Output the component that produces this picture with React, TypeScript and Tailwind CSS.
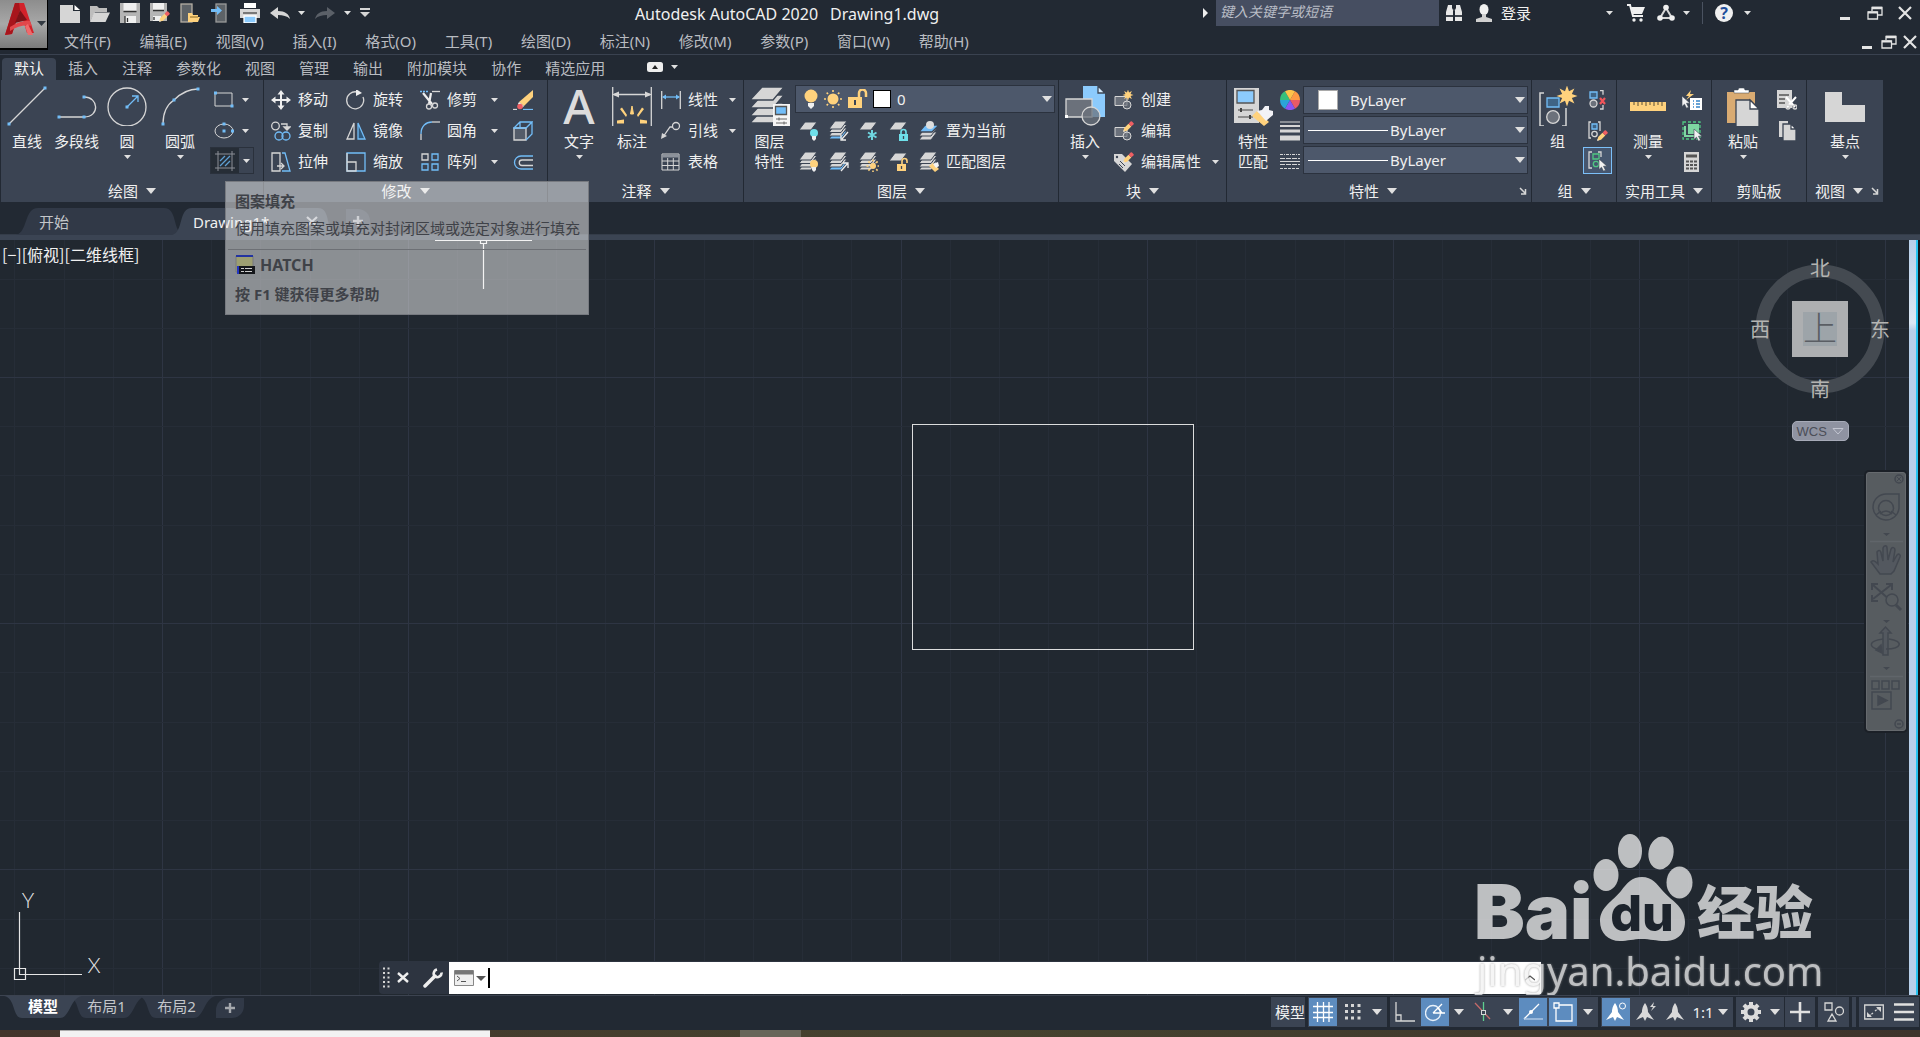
import React from "react";

type P = { children?: React.ReactNode };

const G = "#d6d6d6";
const B = "#72bdf8";
const Y = "#ffd27d";
const D = "#3b4453";

const Icon = ({ s = 20, w, h, children }: P & { s?: number; w?: number; h?: number }) => (
  <svg
    width={w ?? s}
    height={h ?? s}
    viewBox={`0 0 ${w ?? s} ${h ?? s}`}
    fill="none"
    stroke={G}
    strokeWidth="1.3"
    className="shrink-0"
    aria-hidden="true"
  >
    {children}
  </svg>
);

const Down = ({ big = false }: { big?: boolean }) =>
  big ? (
    <svg width="10" height="6" viewBox="0 0 10 6" className="shrink-0" aria-hidden="true">
      <path d="M0 0h10L5 6z" fill="#e0e0e0" />
    </svg>
  ) : (
    <svg width="7" height="4" viewBox="0 0 7 4" className="shrink-0" aria-hidden="true">
      <path d="M0 0h7L3.500 4z" fill="#e0e0e0" />
    </svg>
  );

const Dot = ({ x, y }: { x: number; y: number }) => (
  <rect x={x - 1.5} y={y - 1.5} width="3" height="3" fill={B} stroke="none" />
);

const Sheet = ({ y, fill = G }: { y: number; fill?: string }) => (
  <path d={`M6 ${y}H18L12 ${y + 8}H0z`} fill={fill} stroke={D} strokeWidth="1" />
);
const Stack = ({ bottom = G }: { bottom?: string }) => (
  <>
    <Sheet y={10} fill={bottom} />
    <Sheet y={7} />
    <Sheet y={3.5} />
    <Sheet y={0} />
  </>
);
const Bulb = ({ x, y, c }: { x: number; y: number; c: string }) => (
  <g stroke="none">
    <circle cx={x} cy={y} r="4" fill={c} />
    <path d={`M${x - 2} ${y + 3}h4v3l-2 2l-2-2z`} fill="#eee" />
  </g>
);
const Lock = ({ x, y, c, open }: { x: number; y: number; c: string; open?: boolean }) => (
  <g>
    <rect x={x} y={y} width="9" height="7" fill={c} stroke="none" />
    <path
      d={open ? `M${x + 5} ${y}v-3a2.500 2.500 0 0 1 5 0v2` : `M${x + 2} ${y}v-2a2.500 2.500 0 0 1 5 0v2`}
      stroke={c}
      strokeWidth="1.600"
    />
    <path d={`M${x + 4.5} ${y + 2}v3`} stroke={D} />
  </g>
);
const Sun = ({ x, y, r = 4, c = Y }: { x: number; y: number; r?: number; c?: string }) => (
  <g stroke={c} strokeWidth="1.6">
    <circle cx={x} cy={y} r={r} fill={c} stroke="none" />
    {[0, 45, 90, 135, 180, 225, 270, 315].map((a) => (
      <path key={a} d={`M${x} ${y - r - 1.5}v-2`} transform={`rotate(${a} ${x} ${y})`} />
    ))}
  </g>
);
const Star = ({ x, y, r }: { x: number; y: number; r: number }) => (
  <polygon
    fill={Y}
    stroke="none"
    points={Array.from({ length: 16 }, (_, i) => {
      const q = i % 2 ? r * 0.5 : r;
      const a = (i * Math.PI) / 8 - Math.PI / 2;
      return `${(x + q * Math.cos(a)).toFixed(2)},${(y + q * Math.sin(a)).toFixed(2)}`;
    }).join(" ")}
  />
);
const Pencil = ({ x, y }: { x: number; y: number }) => (
  <g transform={`translate(${x} ${y}) rotate(45)`} stroke="none">
    <path d="M-2 3h4v6l-2 3.500l-2-3.500z" fill={Y} />
    <rect x="-2" y="-1" width="4" height="4" rx="1" fill="#ef5f63" />
    <path d="M-1 10.800L0 12.500l1-1.700z" fill="#eee" />
  </g>
);
const Cursor = ({ x, y }: { x: number; y: number }) => (
  <path
    transform={`translate(${x} ${y})`}
    d="M0 0v10.500l2.500-2.300l2 4l2-1l-2-4h3.500z"
    fill="#f2f2f2"
    stroke={D}
    strokeWidth=".6"
  />
);

/* ---------- ribbon building blocks ---------- */

const Panel = ({
  title,
  width,
  children,
  arrow = true,
  launcher = false,
}: P & { title: string; width: string; arrow?: boolean; launcher?: boolean }) => (
  <section className={`${width} shrink-0 h-[122px] bg-[#3b4453] flex flex-col`}>
    <div className="flex pt-1 h-[97px]">{children}</div>
    <footer className="h-[25px] pt-[3px] flex items-center">
      <button className="flex-1 flex items-center justify-center gap-2">
        <span className="whitespace-nowrap">{title}</span>
        {arrow && <Down big />}
      </button>
      {launcher && (
        <button aria-label={`${title} 设置`} className="w-3 shrink-0">
          <Icon s={8}>
            <path d="M1 1l5 5M6.500 2v5H2" strokeWidth="1.500" />
          </Icon>
        </button>
      )}
    </footer>
  </section>
);

const Big = ({
  label,
  label2,
  width,
  arrow,
  children,
}: P & { label: string; label2?: string; width: string; arrow?: boolean }) => (
  <button className={`${width} shrink-0 flex flex-col items-center pt-0.5`}>
    {children}
    <span className="pt-[5px] leading-5 whitespace-nowrap">{label}</span>
    {label2 && <span className="leading-5">{label2}</span>}
    {arrow && (
      <span className="h-3 flex items-center">
        <Down />
      </span>
    )}
  </button>
);

const Small = ({ label, children }: P & { label?: string }) => (
  <button className="h-[31px] flex items-center gap-[7px] whitespace-nowrap">
    {children}
    {label && <span className="pb-0.5">{label}</span>}
  </button>
);
const Drop = ({ name }: { name: string }) => (
  <button aria-label={name} className="h-[31px] w-3.5 flex items-center justify-center">
    <Down />
  </button>
);

/* ---------- title bar ---------- */

const QIcon = ({ name, children, width = "w-[30px]" }: P & { name: string; width?: string }) => (
  <button aria-label={name} className={`${width} h-[26px] shrink-0 flex items-center justify-center`}>
    {children}
  </button>
);

const WinMin = () => (
  <Icon w={16} h={14}>
    <path d="M3 12.500h10" strokeWidth="3" stroke="#e4e4e4" />
  </Icon>
);
const WinRestore = () => (
  <Icon w={16} h={14}>
    <path d="M5 5V1.500h10V9h-4" stroke="#e4e4e4" />
    <path d="M5 2h10" strokeWidth="2.500" stroke="#e4e4e4" />
    <path d="M1 6h9.500v7H1z" stroke="#e4e4e4" />
    <path d="M1 6.500h9.500" strokeWidth="2" stroke="#e4e4e4" />
  </Icon>
);
const WinClose = () => (
  <Icon w={14} h={14}>
    <path d="M1 1l12 12M13 1L1 13" strokeWidth="2.200" stroke="#e4e4e4" />
  </Icon>
);

const menus = [
  "文件(F)", "编辑(E)", "视图(V)", "插入(I)", "格式(O)", "工具(T)",
  "绘图(D)", "标注(N)", "修改(M)", "参数(P)", "窗口(W)", "帮助(H)",
];

const Header = () => (
  <header className="flex h-[55px] border-b border-[#3a4250]">
    <button
      aria-label="应用程序菜单"
      className="w-12 h-[50px] shrink-0 flex items-center border-b-2 border-r border-black bg-gradient-to-b from-[#8d8d8d] via-[#a8a8a8] to-[#7b7b7b]"
    >
      <svg width="46" height="48" viewBox="0 0 46 48" aria-hidden="true">
        <path d="M5 35L15 3h9l10 30h-7L20 10l-8 24z" fill="#d3222a" />
        <path d="M5 35L15 3h4L20 10l-8 24z" fill="#a8151c" />
        <path d="M10 27c8-5 15-7 20-6l2 5c-7-2-14 0-22 5z" fill="#e2474b" />
        <path d="M20 10l-5 13 12-3z" fill="#7d1217" />
        <path d="M28 24l5 11h-5l-3-9z" fill="#ef6a6c" />
        <path d="M37 21h9l-4.500 5z" fill="#333a42" />
      </svg>
    </button>
    <div className="flex-1 flex flex-col min-w-0">
      <div className="flex h-[30px] pl-[7px]">
        <QIcon name="新建">
          <Icon><path d="M0 2h13v6h7v12H0z" fill={G} stroke="none" /><path d="M14.500 2l5.500 5h-5.500z" fill="#fff" stroke="none" /></Icon>
        </QIcon>
        <QIcon name="打开">
          <Icon><path d="M0 19V3h7l2 2h8v4H5z" fill="#bdbdbd" stroke="none" /><path d="M4 9.500h16L15.500 19H0z" fill={G} stroke="none" /></Icon>
        </QIcon>
        <QIcon name="保存">
          <Icon><path d="M0 0h20v20H0z" fill="#b5b5b5" stroke="none" /><path d="M3.500 0h13v8h-13zM5 13h11v7H5z" fill="#f0f0f0" stroke="none" /><path d="M3.500 8.500h13M5 13v7M7.500 15v4" stroke="#333" /></Icon>
        </QIcon>
        <QIcon name="另存为">
          <Icon><path d="M0 0h17v18H0z" fill="#b5b5b5" stroke="none" /><path d="M3 0h11v7H3zM3 13h8v5H3z" fill="#f0f0f0" stroke="none" /><path d="M3 7.500h11M4 14v3" stroke="#333" /><Pencil x={18} y={10} /></Icon>
        </QIcon>
        <QIcon name="从 Web 打开">
          <Icon><rect x="1" y="1" width="11" height="18" fill="#5d6267" stroke="#b5aea4" /><path d="M8 19v-9h4l1 2h5v2h2l-2 5z" fill={Y} stroke="none" /><path d="M10 14h8" stroke="#a57f35" /></Icon>
        </QIcon>
        <QIcon name="保存到 Web">
          <Icon><rect x="6" y="1" width="10" height="18" fill="#5d6267" stroke="#9a9a9a" /><path d="M1 6h6V3l5 4.500L7 12V9H1z" fill={B} stroke="none" /></Icon>
        </QIcon>
        <QIcon name="打印">
          <Icon><path d="M4 0h12v5H4z" fill="#fff" stroke="none" /><path d="M0 6h20v9H0z" fill={G} stroke="none" /><path d="M3 10h14" stroke="#444" /><path d="M4 13h12v7H4z" fill="#8ccbfd" stroke="#fff" /></Icon>
        </QIcon>
        <QIcon name="放弃">
          <Icon><path d="M0 10l8-6v4c7 0 11 3 12 8c-3-3-7-4-12-4v4z" fill={G} stroke="none" /></Icon>
        </QIcon>
        <QIcon name="放弃列表" width="w-3"><Down /></QIcon>
        <QIcon name="重做" width="w-9">
          <Icon><path d="M20 10l-8-6v4C5 8 1 11 0 16c3-3 7-4 12-4v4z" fill="#5b6068" stroke="none" /></Icon>
        </QIcon>
        <QIcon name="重做列表" width="w-2"><Down /></QIcon>
        <QIcon name="自定义快速访问工具栏" width="w-7">
          <Icon w={10} h={10}><path d="M0 1h10" strokeWidth="2" /><path d="M0 4h10l-5 5z" fill={G} stroke="none" /></Icon>
        </QIcon>
        <h1 className="flex-1 h-[30px] pb-0.5 flex items-center justify-center gap-3 text-base text-[#f0f0f0] whitespace-nowrap">
          <span>Autodesk AutoCAD 2020</span>
          <span>Drawing1.dwg</span>
        </h1>
        <QIcon name="展开搜索" width="w-[21px]">
          <Icon w={5} h={10}><path d="M0 0l5 5l-5 5z" fill="#eee" stroke="none" /></Icon>
        </QIcon>
        <input
          aria-label="搜索"
          placeholder="键入关键字或短语"
          className="w-[223px] h-[26px] pb-1 bg-[#464e61] px-1 text-sm italic placeholder:text-[#b9bdc6] outline-none"
        />
        <QIcon name="搜索">
          <Icon s={18}><path d="M3 1h4v3l1 2v11H1V8zM15 1h-4v3l-1 2v11h7V8z" fill="#e8e8e8" stroke="none" /><path d="M1 12h7M10 12h7M8 6h2" stroke="#40454d" strokeWidth="2" /></Icon>
        </QIcon>
        <QIcon name="用户">
          <Icon s={18}><ellipse cx="9" cy="5.500" rx="4.500" ry="5.500" fill="#f0f0f0" stroke="none" /><path d="M7 10h4v3l6 2v3H1v-3l6-2z" fill="#d0d0d0" stroke="none" /></Icon>
        </QIcon>
        <button className="w-[118px] h-[26px] pl-0.5 pr-1 flex items-center justify-between">
          <span>登录</span><Down />
        </button>
        <QIcon name="商店" width="w-[38px]">
          <Icon s={18}><path d="M0 1h3l3 11h10" stroke="#f0f0f0" strokeWidth="2" /><path d="M4 3h14l-3 7H6z" fill="#f0f0f0" stroke="none" /><circle cx="7" cy="16" r="1.700" fill="#f0f0f0" stroke="none" /><circle cx="14" cy="16" r="1.700" fill="#f0f0f0" stroke="none" /></Icon>
        </QIcon>
        <QIcon name="Autodesk 应用" width="w-[22px]">
          <Icon s={18}><path d="M9 4L3 14h12z" stroke={G} strokeWidth="2" /><circle cx="9" cy="3.500" r="2.800" fill="#f0f0f0" stroke="none" /><circle cx="3" cy="14" r="2.800" fill="#f0f0f0" stroke="none" /><circle cx="15" cy="14" r="2.800" fill="#f0f0f0" stroke="none" /></Icon>
        </QIcon>
        <QIcon name="应用列表" width="w-[18px]"><Down /></QIcon>
        <span className="w-3.5 h-[26px] flex justify-center py-0.5"><span className="w-px bg-[#4a5260]" /></span>
        <QIcon name="帮助">
          <span className="size-[18px] rounded-full bg-[#f0f0f0] text-[#1f4f9c] text-base leading-[18px] font-bold text-center">?</span>
        </QIcon>
        <QIcon name="帮助列表" width="w-4"><Down /></QIcon>
        <span className="w-[75px]" />
        <QIcon name="最小化"><WinMin /></QIcon>
        <QIcon name="还原"><WinRestore /></QIcon>
        <QIcon name="关闭"><WinClose /></QIcon>
      </div>
      <div className="flex h-6 pl-4 text-[#b9bcc1]">
        <nav className="flex w-[905px] justify-between">
          {menus.map((m) => (
            <button key={m} className="whitespace-nowrap pb-0.5">{m}</button>
          ))}
        </nav>
        <span className="flex-1" />
        <button aria-label="最小化图形" className="w-[22px] flex items-center justify-center"><WinMin /></button>
        <button aria-label="还原图形" className="w-[22px] flex items-center justify-center"><WinRestore /></button>
        <button aria-label="关闭图形" className="w-5 flex items-center justify-center"><WinClose /></button>
      </div>
    </div>
  </header>
);

const tabs = ["默认", "插入", "注释", "参数化", "视图", "管理", "输出", "附加模块", "协作", "精选应用"];
const RibbonTabs = () => (
  <nav className="flex h-[25px] pt-[3px] pl-0.5">
    {tabs.map((t, i) => (
      <button
        key={t}
        className={
          i === 0
            ? "px-3 h-[22px] pb-0.5 leading-5 bg-[#3b4453] text-[#f4f4f4] rounded-t-sm"
            : "px-3 h-[22px] pb-0.5 leading-5 text-[#b9bcc1]"
        }
      >
        {t}
      </button>
    ))}
    <button aria-label="最小化功能区" className="ml-[30px] h-[18px] flex items-center gap-2">
      <svg width="16" height="10" viewBox="0 0 16 10" aria-hidden="true">
        <rect width="16" height="10" rx="2.500" fill="#eee" /><path d="M5 7h6L8 3z" fill="#222" />
      </svg>
      <Down />
    </button>
  </nav>
);

/* ---------- ribbon panels ---------- */

const DrawPanel = () => (
  <Panel title="绘图" width="w-[262px]">
    <Big label="直线" width="w-[52px]">
      <Icon s={40}><path d="M2 38L38 2" /><Dot x={2} y={38} /><Dot x={38} y={2} /></Icon>
    </Big>
    <Big label="多段线" width="w-[47px]">
      <Icon s={40}><path d="M2 31h25M27 11c15 0 16 20 0 20" /><Dot x={2} y={31} /><Dot x={27} y={31} /><Dot x={27} y={11} /></Icon>
    </Big>
    <Big label="圆" width="w-[54px]" arrow>
      <Icon s={40}><circle cx="20" cy="21" r="19" /><path d="M20 21L31 10M25 10h6v6" stroke={B} /><Dot x={20} y={21} /></Icon>
    </Big>
    <Big label="圆弧" width="w-[52px]" arrow>
      <Icon s={40}><path d="M3 38C3 26 8 18 14 14C20 8 28 3 38 3" /><Dot x={3} y={38} /><Dot x={14} y={14} /><Dot x={38} y={3} /></Icon>
    </Big>
    <div className="ml-1 flex flex-col">
      {[
        <Icon key="r"><path d="M1 3h17v13H1z" strokeWidth="1" /><Dot x={1.5} y={3} /><Dot x={18} y={16} /></Icon>,
        <Icon key="e"><ellipse cx="10" cy="10" rx="9" ry="7" strokeWidth="1" /><Dot x={10} y={3} /><Dot x={10} y={10} /><Dot x={18.5} y={10} /></Icon>,
      ].map((ic, i) => (
        <div key={i} className="flex h-[31px]">
          <button aria-label={i ? "椭圆" : "矩形"} className="w-[28px] flex items-center justify-center">{ic}</button>
          <Drop name={i ? "椭圆选项" : "矩形选项"} />
        </div>
      ))}
      <div className="flex h-[27px] mt-px border border-[#2a313c]">
        <button aria-label="图案填充" className="w-[28px] bg-[#262d36] flex items-center justify-center">
          <Icon>
            <path d="M5 10l5-5M5 15L15 5M10 15l5-5" stroke="#5f9fd2" />
            <path d="M0 3h20M0 17h20M3 0v20M17 0v20" stroke="#8b8f96" strokeWidth="1" />
          </Icon>
        </button>
        <button aria-label="填充选项" className="w-3.5 flex items-center justify-center"><Down /></button>
      </div>
    </div>
  </Panel>
);

const ModifyPanel = () => (
  <Panel title="修改" width="w-[283px]">
    <div className="pl-[7px] w-[82px] flex flex-col">
      <Small label="移动">
        <Icon><path d="M10 2v16M2 10h16" stroke="#eee" strokeWidth="2" /><path d="M10 0l3.500 4.500h-7zM10 20l3.500-4.500h-7zM0 10l4.500-3.500v7zM20 10l-4.500-3.500v7z" fill="#eee" stroke="none" /></Icon>
      </Small>
      <Small label="复制">
        <Icon><circle cx="4.500" cy="5" r="3.800" /><path d="M10 3h6v5" /><path d="M13 6l3 3l3-3z" fill={G} /><circle cx="8" cy="15" r="4" stroke={B} /><circle cx="15" cy="15" r="4" stroke={B} /></Icon>
      </Small>
      <Small label="拉伸">
        <Icon><path d="M1 1h8v18H1z" /><path d="M11 1h3l5 18h-8" stroke={B} /><path d="M6 14h7M10 11l3 3l-3 3" /></Icon>
      </Small>
    </div>
    <div className="w-[74px] flex flex-col">
      <Small label="旋转">
        <Icon><path d="M11 2A8.500 8.500 0 1 0 17 7" /><path d="M10-1l6 4l-6 3z" fill="#eee" stroke="none" /></Icon>
      </Small>
      <Small label="镜像">
        <Icon><path d="M8 2v16H1z" /><path d="M12 2v16h7z" stroke={B} fill="#31597c" /></Icon>
      </Small>
      <Small label="缩放">
        <Icon><path d="M1 1h18v18H1z" stroke={B} /><path d="M1 10v9h9v-9zM1 1v9" /></Icon>
      </Small>
    </div>
    <div className="w-[67px] flex flex-col">
      <Small label="修剪">
        <Icon><path d="M0 1.500h8" stroke={B} strokeDasharray="2 1" /><path d="M12 1.500h8" /><path d="M3 3l9 11M11 3L9 14" stroke="#eee" strokeWidth="2.200" /><circle cx="9" cy="16.500" r="2.500" /><circle cx="15" cy="15.500" r="2.500" /></Icon>
      </Small>
      <Small label="圆角">
        <Icon><path d="M1 19v-6" /><path d="M1 13C1 5 6 1 12 1" stroke={B} /><path d="M12 1h8" /></Icon>
      </Small>
      <Small label="阵列">
        <Icon><path d="M2 2h6v6H2z" /><path d="M12 2h6v6h-6zM2 12h6v6H2zM12 12h6v6h-6z" stroke={B} /></Icon>
      </Small>
    </div>
    <div className="w-[26px] flex flex-col items-start">
      <Drop name="修剪选项" /><Drop name="圆角选项" /><Drop name="阵列选项" />
    </div>
    <div className="flex flex-col">
      <Small><Icon><path d="M20 0v7l-9 9l-5-4z" fill={Y} stroke="none" /><path d="M6 12l5 4l-1.500 1.500L5 14z" fill="#fff" stroke="none" /><circle cx="7" cy="16.500" r="2.800" fill="#ef5f63" stroke="none" /><path d="M0 19.500h4" /><path d="M10 19.500h10" stroke={B} /></Icon></Small>
      <Small><Icon><path d="M1 7h12v12H1z" fill="#545c69" /><path d="M1 7l6-6h12l-6 6zM13 19l6-6V1M7 1v6" stroke={B} /></Icon></Small>
      <Small><Icon><path d="M20 4H8a6.500 6.500 0 0 0 0 13h12" stroke={B} /><path d="M20 8H9a2.700 2.700 0 0 0 0 5.500h11" /></Icon></Small>
    </div>
  </Panel>
);

const AnnotatePanel = () => (
  <Panel title="注释" width="w-[195px]">
    <Big label="文字" width="w-[62px]" arrow>
      <span className="h-10 text-[48px] leading-10 font-medium text-[#dcdcdc]">A</span>
    </Big>
    <Big label="标注" width="w-[44px]">
      <Icon s={40}>
        <path d="M.7 1v39M39.300 1v39M2 8.500h36" />
        <path d="M0 8.500l7-3v6zM40 8.500l-7-3v6z" fill={G} stroke="none" />
        <g fill={Y} stroke="none">
          <path d="M18.500 28l1.500-8l1.500 8z" stroke={Y} strokeWidth="1" />
          <path d="M14 31l-6-8l2-1.500l5 7.500zM26 31l6-8l-2-1.500l-5 7.500z" />
          <path d="M12 33.500l-7 1v3h7zM28 33.500l7 1v3h-7z" />
        </g>
      </Icon>
    </Big>
    <div className="ml-[7px] w-[62px] flex flex-col">
      <Small label="线性"><Icon><path d="M.7 1v18M19.300 1v18" /><path d="M2 7h16" stroke={B} /><path d="M1 7l4-2.500v5zM19 7l-4-2.500v5z" fill={B} stroke="none" /></Icon></Small>
      <Small label="引线"><Icon><path d="M2 16L9 6h3" /><circle cx="15" cy="5" r="3.500" /><path d="M0 18l1-6l5 3z" fill={G} stroke="none" /></Icon></Small>
      <Small label="表格"><Icon><path d="M1 2h17v16H1zM1 9h17M1 13.500h17M6.700 6v12M12.300 6v12" strokeWidth="1" /><path d="M1 4h17" strokeWidth="3" stroke="#8d939c" /></Icon></Small>
    </div>
    <div className="w-4 flex flex-col items-end"><Drop name="线性选项" /><Drop name="引线选项" /></div>
  </Panel>
);

const Select = ({ label, options, children }: P & { label: string; options: string[] }) => (
  <label className="flex-1 h-7 flex items-center bg-[#4d586b] border border-[#2b323e]">
    {children}
    <select aria-label={label} className="flex-1 min-w-0 appearance-none bg-transparent outline-none text-[15px]">
      {options.map((o) => <option key={o}>{o}</option>)}
    </select>
    <span className="pr-0.5"><Down big /></span>
  </label>
);

const LayerPanel = () => (
  <Panel title="图层" width="w-[314px]">
    <Big label="图层" label2="特性" width="w-[51px]">
      <Icon s={40}>
        {[24, 17, 9, 1].map((y) => <path key={y} d={`M12 ${y}h22l-11 13H0z`} fill={G} stroke={D} />)}
        <path d="M23 18h17v22H23z" fill="#f5f5f5" stroke="none" />
        <path d="M25.500 20.500h11v8h-11z" fill={B} stroke="#555" />
        <path d="M26 33h11M26 37h11M29 31.500v3M34 35.500v3" stroke="#666" strokeWidth="1" />
      </Icon>
    </Big>
    <div className="flex-1 pr-[3px] flex flex-col">
      <div className="h-[31px] pt-px flex">
        <Select label="图层" options={["0"]}>
          <span className="flex items-center gap-[5px] pl-2 pr-1.5">
            <Icon w={14} h={20}><circle cx="7" cy="7" r="6.500" fill={Y} stroke="none" /><path d="M4 14h6v3l-3 3l-3-3z" fill="#f0f0f0" stroke="none" /></Icon>
            <Icon><Sun x={10} y={10} r={5.5} /></Icon>
            <Icon><path d="M0 8h14v11H0z" fill={Y} stroke="none" /><path d="M11 8V4a3.500 3.500 0 0 1 7 0v4" stroke={Y} strokeWidth="2.500" /><path d="M7 11v5" stroke={D} strokeWidth="2" /></Icon>
            <span className="size-[18px] bg-white border border-black" />
          </span>
        </Select>
      </div>
      <div className="flex pl-1 gap-2.5">
        <Small><Icon><Sheet y={1} /><Bulb x={15} y={12} c="#6fe0ea" /></Icon></Small>
        <Small><Icon><Stack bottom={B} /><path d="M19 11l-6 7M12 14v5h5" stroke="#eee" /></Icon></Small>
        <Small><Icon><Sheet y={1} /><path d="M13 9v10M9 11.500l8.500 5M17.500 11.500l-8.500 5" stroke="#6fd6e0" strokeWidth="2" /></Icon></Small>
        <Small><Icon><Sheet y={1} /><Lock x={10} y={13} c="#6fe0ea" /></Icon></Small>
        <Small label="置为当前"><Icon><Sheet y={11} /><Sheet y={7} /><path d="M6 4h14l-7 7H0z" fill={B} stroke={D} /><circle cx="11" cy="4" r="4" fill="#ddd" stroke="none" /></Icon></Small>
      </div>
      <div className="flex pl-1 gap-2.5">
        <Small><Icon><Stack /><Bulb x={15} y={12} c={Y} /></Icon></Small>
        <Small><Icon><Stack bottom={B} /><path d="M12 19l7-8M14 11h5v5" stroke="#eee" /></Icon></Small>
        <Small><Icon><Stack /><Sun x={14} y={14} r={3} /></Icon></Small>
        <Small><Icon><Sheet y={1} /><Lock x={8} y={12} c={Y} open /></Icon></Small>
        <Small label="匹配图层"><Icon><Stack /><path d="M10 14l4-3l6 6l-4 3z" fill={Y} stroke="none" /><path d="M14 12l5-2l1 4l-3 2z" fill="#f4f4f4" stroke="none" /></Icon></Small>
      </div>
    </div>
  </Panel>
);

const Block = () => (
  <g strokeWidth="1"><path d="M1 6.500h12v9H1z" fill="#6b717b" /><circle cx="13" cy="15" r="4" fill="#6b717b" fillOpacity=".7" /></g>
);

const BlockPanel = () => (
  <Panel title="块" width="w-[167px]">
    <Big label="插入" width="w-[52px]" arrow>
      <Icon s={40}>
        <path d="M18 0h15l7 7v24H18z" fill="#8ccbfd" stroke="none" /><path d="M33 0v7h7z" fill="#d7edff" stroke={D} />
        <path d="M1 13h26v18H1z" fill="#6b717b" /><circle cx="26" cy="30" r="9" fill="#6b717b" fillOpacity=".75" />
        <rect x="0" y="29" width="3" height="3" fill="#fff" stroke="none" />
      </Icon>
    </Big>
    <div className="ml-[3px] w-[94px] flex flex-col">
      <Small label="创建"><Icon><Block /><Star x={14} y={5} r={5.5} /></Icon></Small>
      <Small label="编辑"><Icon><Block /><Pencil x={18} y={2} /></Icon></Small>
      <Small label="编辑属性"><Icon><path d="M0 2h8l10 10l-7 8L0 9z" fill={G} stroke="none" /><circle cx="3" cy="5" r="1.200" fill={D} stroke="none" /><path d="M6 9l5 5M5 12l4 4" stroke={D} strokeWidth="1" /><Pencil x={18} y={2} /></Icon></Small>
    </div>
    <div className="h-[93px] flex flex-col justify-end"><Drop name="编辑属性选项" /></div>
  </Panel>
);

const wheel = ["#ff9a45", "#ea5a66", "#8a55f5", "#2ba4d8", "#37c07c", "#ffc34a"];
const PropsPanel = () => (
  <Panel title="特性" width="w-[304px]" launcher>
    <Big label="特性" label2="匹配" width="w-[52px]">
      <Icon s={40}>
        <path d="M1 2h25v35H1z" fill={G} stroke="none" /><path d="M4 4.500h17v12.500H4z" fill="#8ccbfd" stroke="#555" />
        <path d="M5 24h15M5 31h15" stroke="#777" /><path d="M8 22v4M17 29v4" stroke="#444" strokeWidth="2" />
        <path d="M19 30l5-5l12 11l-5 4z" fill={Y} stroke="none" /><path d="M24 25l5-1l3-4h4v4l4 1v4l-7 6z" fill="#f2f2f6" stroke="none" />
      </Icon>
    </Big>
    <div className="w-6 pl-px flex flex-col">
      <Small>
        <Icon>
          {wheel.map((c, i) => (
            <path key={c} d="M10 10V0A10 10 0 0 1 18.660 5z" fill={c} stroke="none" transform={`rotate(${i * 60 + 30} 10 10)`} />
          ))}
        </Icon>
      </Small>
      <Small><Icon><path d="M0 1h20" strokeWidth="1" /><path d="M0 5h20" strokeWidth="2" /><path d="M0 10h20" strokeWidth="3" /><path d="M0 17h20" strokeWidth="5" /></Icon></Small>
      <Small><Icon><g strokeWidth="1"><path d="M0 2.500h20" strokeDasharray="3 1 1 1" /><path d="M0 6.500h20" strokeDasharray="5 1" /><path d="M0 9.500h20" /><path d="M0 12.500h20" strokeDasharray="5 1" /><path d="M0 16.500h20" strokeDasharray="3 1" /></g></Icon></Small>
    </div>
    <div className="flex-1 pt-0.5 pr-[3px] flex flex-col gap-0.5">
      <div className="flex h-7"><Select label="对象颜色" options={["ByLayer"]}>
        <span className="ml-3.5 mr-3 size-5 bg-white border border-[#a9a9a9]" />
      </Select></div>
      <div className="flex h-7"><Select label="线宽" options={["ByLayer"]}><span className="ml-1 mr-0.5 w-20 h-px bg-white" /></Select></div>
      <div className="flex h-7"><Select label="线型" options={["ByLayer"]}><span className="ml-1 mr-0.5 w-20 h-px bg-white" /></Select></div>
    </div>
  </Panel>
);

const GroupPanel = () => (
  <Panel title="组" width="w-[84px]">
    <Big label="组" width="w-[51px]">
      <Icon s={40}>
        <path d="M6 7H2v33h4M24 40h4V22" strokeWidth="1.500" /><path d="M9 12h12v9H9z" fill="#3f6485" stroke={B} />
        <circle cx="15" cy="31" r="6.300" fill="#6b717b" /><Star x={29} y={10} r={10.5} />
      </Icon>
    </Big>
    <div className="flex flex-col items-center">
      <Small><Icon><path d="M2 2h7v6H2z" fill="#3f6485" stroke={B} /><circle cx="5.500" cy="13.500" r="3.500" fill="#6b717b" /><path d="M12 .7h3v4M15 15v4h-3" /><path d="M12 8l5 6M17 8l-5 6" stroke="#f0555a" strokeWidth="2.200" /></Icon></Small>
      <Small><Icon><path d="M3 1H1v16h2M10 1h2v9" /><path d="M4 3h5v5H4z" fill="#3f6485" stroke={B} /><circle cx="6.500" cy="13" r="2.700" /><Pencil x={18} y={11} /></Icon></Small>
      <button aria-label="组选择" className="mt-px h-[27px] w-[29px] border border-[#7cc0f8] bg-[#46566e] flex items-center justify-center">
        <Icon><path d="M4 1H1v16h3M10 1h3v5" /><path d="M5 3h6v5H5z" stroke="#4fc783" /><circle cx="8" cy="13" r="2.700" stroke="#4fc783" /><Cursor x={11} y={8} /></Icon>
      </button>
    </div>
  </Panel>
);

const UtilPanel = () => (
  <Panel title="实用工具" width="w-[94px]">
    <Big label="测量" width="w-[62px]" arrow>
      <Icon s={40}><path d="M2 16h36v9H2z" fill={Y} stroke="none" /><path d="M6 16v3M10 16v4M14 16v3M18 16v4M22 16v3M26 16v4M30 16v3M34 16v4" stroke="#5d5036" strokeWidth="1" /></Icon>
    </Big>
    <div className="ml-[3px] flex flex-col">
      <Small><Icon><path d="M9 0L4 6h3l-3 4l8-6H8z" fill={Y} stroke="none" /><path d="M8 8h12v12H8z" fill="#fff" stroke="none" /><path d="M11 11h1M14 11h4M11 14h1M14 14h4M11 17h1M14 17h4" stroke="#3584c8" /><Cursor x={0} y={6} /></Icon></Small>
      <Small><Icon><path d="M1 1h17v17H1z" stroke="#4fc783" strokeDasharray="3 2" /><path d="M6 3h11v10H6z" fill="#7ed6a2" stroke="none" /><path d="M3 5v10h9" stroke="#7ed6a2" strokeWidth="2" /><Cursor x={12} y={8} /></Icon></Small>
      <Small><Icon><path d="M2 0h15v20H2z" fill={G} stroke="none" /><path d="M4 2.500h11v3H4z" fill="#555" stroke="none" /><path d="M4 9.500h3M8 9.500h3M12 9.500h3M4 13h3M8 13h3M12 13h3M4 16.500h3M8 16.500h3M12 16.500h3" stroke="#555" strokeWidth="2.200" /></Icon></Small>
    </div>
  </Panel>
);

const ClipPanel = () => (
  <Panel title="剪贴板" width="w-[94px]" arrow={false}>
    <Big label="粘贴" width="w-[62px]" arrow>
      <Icon s={40}>
        <path d="M4 6h28v31H4z" fill="#d9ab72" stroke="none" /><path d="M11 7V4h4l1-2h5l1 2h4v3z" fill="#fff" stroke={D} strokeWidth=".5" />
        <path d="M13 14h14l9 9v19H13z" fill={G} stroke={D} /><path d="M27 14v9h9z" fill="#fff" stroke={D} />
      </Icon>
    </Big>
    <div className="ml-[3px] flex flex-col">
      <Small><Icon><path d="M0 0h15v18H0z" fill={G} stroke="none" /><path d="M2 5h10M2 9h6M2 13h6" stroke="#555" /><path d="M9 7l9 10M19 7L10 17" stroke="#fff" strokeWidth="2" /><circle cx="11" cy="17" r="2" /><circle cx="18" cy="17" r="2" /></Icon></Small>
      <Small><Icon><path d="M2 0h9v16H2z" fill={G} stroke="none" /><path d="M6 3h8l5 5v12H6z" fill={G} stroke={D} /><path d="M14 3v5h5z" fill="#fff" stroke={D} /></Icon></Small>
    </div>
  </Panel>
);

const ViewPanel = () => (
  <Panel title="视图" width="w-[76px]" launcher>
    <Big label="基点" width="w-[76px]" arrow>
      <Icon s={40}><path d="M0 6h17v13h23v17H0z" fill={G} stroke="none" /></Icon>
    </Big>
  </Panel>
);

/* ---------- drawing tabs ---------- */

const FileTabs = () => (
  <div className="flex h-[33px] pt-1.5 border-b border-[#343c49]">
    <button className="relative w-[160px] ml-5 h-[27px] text-left pl-[19px] text-[#c3c6ca]">
      <svg className="absolute -left-1 top-0" width="168" height="27" viewBox="0 0 168 27" aria-hidden="true">
        <path d="M0 27C12 24 8 0 22 0H148C162 0 156 24 168 27z" fill="#313947" />
      </svg>
      <span className="relative">开始</span>
    </button>
    <div className="relative w-[156px] h-[27px] flex items-center pl-[13px] pr-[18px] justify-between text-[#f0f0f0]">
      <svg className="absolute -left-4 top-0" width="178" height="27" viewBox="0 0 178 27" aria-hidden="true">
        <path d="M8 27C20 24 14 0 28 0H154C168 0 160 24 174 27z" fill="#3b4453" />
      </svg>
      <button className="relative">Drawing1*</button>
      <button aria-label="关闭 Drawing1" className="relative">
        <Icon w={12} h={11}><path d="M1 1l10 9M11 1L1 10" strokeWidth="2.200" stroke="#b9bdc4" /></Icon>
      </button>
    </div>
    <button aria-label="新图形" className="ml-2.5 w-6 h-6 mt-px rounded-tr-xl rounded-bl-xl bg-[#313947] flex items-center justify-center">
      <Icon s={10}><path d="M5 0v10M0 5h10" strokeWidth="2.400" stroke="#a9adb4" /></Icon>
    </button>
  </div>
);

const Tooltip = () => (
  <div
    role="tooltip"
    className="absolute left-[225px] top-[181px] w-[364px] h-[134px] border border-[#777a80] bg-[#f5f5f5]/50 text-[#3f4248]"
  >
    <p className="pl-[9px] pt-2 leading-[22px] font-bold">图案填充</p>
    <p className="pl-[9px] pt-1.5 leading-5 whitespace-nowrap">使用填充图案或填充对封闭区域或选定对象进行填充</p>
    <hr className="mt-[11px] mx-0.5 border-[#6d7075]" />
    <p className="pl-[9px] pt-1 flex items-center gap-[5px] leading-[22px] font-bold text-base">
      <Icon>
        <path d="M1 1h17v16H1z" fill="#9d9f72" stroke="#77797c" strokeWidth="1" />
        <path d="M1 1h17" stroke="#2334a0" strokeWidth="2" />
        <path d="M3 11h17v8H3z" fill="#15171b" stroke="none" />
        <path d="M3 11v8" stroke="#2334c0" strokeWidth="2" />
        <path d="M6 13.500h3M10 13.500h7M6 16.500h3M10 16.500h7" stroke="#ccc" strokeWidth="1" />
      </Icon>
      HATCH
    </p>
    <p className="pl-[9px] pt-[7px] leading-[22px] font-bold">按 F1 键获得更多帮助</p>
  </div>
);

/* ---------- canvas ---------- */

const STEP = 49.24;
const Grid = () => {
  const lines = (origin: number, count: number) =>
    Array.from({ length: count }, (_, i) => ({
      p: Math.round(origin + (i - 5) * STEP) + 0.5,
      major: (i - 5) % 5 === 0,
    }));
  const stroke = (m: boolean) => (m ? "#2e3543" : "#262d37");
  return (
    <svg className="absolute inset-0 w-full h-full" aria-hidden="true">
      {lines(162, 90).map((l) => <line key={`v${l.p}`} x1={l.p} x2={l.p} y1="0" y2="100%" stroke={stroke(l.major)} />)}
      {lines(137, 60).map((l) => <line key={`h${l.p}`} y1={l.p} y2={l.p} x1="0" x2="100%" stroke={stroke(l.major)} />)}
      <rect x="912.500" y="184.500" width="281" height="225" fill="none" stroke="#dcdddd" />
      <path d="M435 .5h97M483.500 4v45M480.500 .5h6v3h-6z" strokeWidth="1.200" stroke="#f0f0f0" fill="none" />
    </svg>
  );
};

const Ucs = () => (
  <svg className="absolute left-2 bottom-2" width="110" height="104" viewBox="0 0 110 104" fill="none" stroke="#e6e6e6" aria-hidden="true">
    <path d="M11.500 29v62.500H74M6.500 85.500h11v11h-11z" strokeWidth="1.200" />
    <g fill="#e6e6e6" stroke="none" fontSize="21" fontWeight="300" fontFamily="Lato, sans-serif" textAnchor="middle">
      <text x="20" y="25">Y</text>
      <text x="86" y="90">X</text>
    </g>
  </svg>
);

const ViewCube = () => (
  <div className="absolute right-[25px] top-[13px] w-[150px] flex flex-col items-center">
    <svg width="150" height="152" viewBox="0 0 150 152" aria-label="ViewCube">
      <circle cx="75" cy="76" r="58" fill="none" stroke="#444a51" strokeWidth="13" />
      <rect x="47" y="48" width="56" height="56" fill="#adafb1" />
      <rect x="58" y="59" width="34" height="34" fill="#9da4a9" />
      <g fontFamily="'Noto Sans CJK SC', sans-serif" textAnchor="middle" fill="#b4b4b2" fontSize="20">
        <text x="75" y="88" fontSize="34" fill="#5a5e64" fontWeight="300">上</text>
        <text x="75" y="23">北</text><text x="75" y="144">南</text>
        <text x="15" y="84">西</text><text x="135" y="84">东</text>
      </g>
    </svg>
    <button className="mt-4 w-[57px] h-5 rounded-[5px] border border-[#a7abb8] bg-[#8f93a1] flex items-center justify-between px-1 font-['Liberation_Sans',sans-serif] text-[13px] leading-none text-[#4b4e58]">
      WCS
      <Icon w={12} h={7}><path d="M1 .5h10L6 6z" strokeWidth="1" stroke="#c2c5d0" /></Icon>
    </button>
  </div>
);

const NavBar = () => (
  <div className="absolute right-[14px] top-[232px] w-10 h-[259px] rounded-[3px] bg-[#575c60] border border-[#666a6e] shadow-[0_0_0_2px_#1b2027]">
    <svg width="38" height="257" viewBox="0 0 38 257" fill="none" stroke="#434850" strokeWidth="1.500" aria-label="导航栏">
      <circle cx="32" cy="6" r="4" /><path d="M30 4l4 4M34 4l-4 4" strokeWidth="1" />
      <path d="M19 21h13v14a13 13 0 1 1-13-14zM9 42l5-4M29 42l-5-4" /><circle cx="19" cy="35" r="7.500" /><path d="M13 41c4-4 8-4 12 0" />
      <g fill="#434850" stroke="none"><path d="M16 60h7l-3.500 3zM16 147h7l-3.500 3zM16 194h7l-3.500 3z" /></g>
      <path d="M3 68.500h33M3 203.500h33" stroke="#60656a" />
      <path d="M13 101l-9-12c2-3 5 0 7 2L10 79c2-3 4-1 4 1l2 8V75c1-3 4-3 4 0l1 12l3-11c1-2 4-2 4 1l-2 12l4-7c2-2 4 0 3 2l-6 14l-3 3z" fill="#53585f" />
      <path d="M6 112l18 16M24 112L6 126M5 117v-6h6M19 111h6v6M5 122v6h6" strokeWidth="2" />
      <circle cx="25" cy="127" r="6" fill="#575c60" /><path d="M29 132l5 5" strokeWidth="3" />
      <path d="M16 182v-22h-3l5.500-6l5.500 6h-3v22z" fill="#53585f" /><path d="M16 166c-15 2-15 8-3 11M22 166c15 2 13 10-3 10" /><path d="M14 172l-5 5l6 3z" fill="#434850" />
      <path d="M5 208h7v8H5zM15 208h7v8h-7zM25 208h7v8h-7zM5 219h19v17H5z" /><path d="M11 223l9 4.500l-9 4.500z" fill="#434850" />
      <circle cx="32" cy="251" r="4" /><path d="M30 251h4" />
    </svg>
  </div>
);

const CommandLine = () => (
  <div className="absolute bottom-px left-[379px] right-[379px] h-[33px] flex bg-[#2d3440] rounded-l">
    <span className="w-[15px] flex items-center justify-center">
      <Icon w={7} h={21}>
        {[0, 4.5, 9, 13.5, 18].map((y) => <path key={y} d={`M0 ${y + 1.5}h2M4.500 ${y + 1.5}h2`} strokeWidth="2" />)}
      </Icon>
    </span>
    <button aria-label="关闭命令行" className="w-[18px] flex items-center justify-center">
      <Icon w={12} h={11}><path d="M1 1l10 9M11 1L1 10" strokeWidth="2.400" stroke="#eee" /></Icon>
    </button>
    <button aria-label="自定义" className="w-[37px] pl-1 flex items-center justify-center">
      <Icon><path d="M2 18L12 8" strokeWidth="3.500" stroke="#eee" strokeLinecap="round" /><path d="M14 1.500c-4 1-4 6-2 7c3 2 7-1 6.500-4" strokeWidth="2.600" stroke="#eee" /></Icon>
    </button>
    <div className="flex-1 h-8 mt-px bg-white flex items-center pl-[5px] pr-1.5">
      <button aria-label="最近使用的命令" className="flex items-center gap-0.5">
        <Icon w={20} h={16}><path d="M.5 .5h19v15H.5z" fill="#efefef" stroke="#888" strokeWidth="1" /><path d="M1 2.500h18" stroke="#777" strokeWidth="4" /><path d="M3 6l3 2.500L3 11M7 11.500h5" stroke="#555" strokeWidth="1" /></Icon>
        <svg width="10" height="5" viewBox="0 0 10 5" aria-hidden="true"><path d="M0 0h10L5 5z" fill="#555" /></svg>
      </button>
      <span className="ml-0.5 w-0.5 h-5 bg-black" />
      <input aria-label="命令" className="flex-1 outline-none text-black" />
      <Icon w={10} h={6}><path d="M0 5l5-4l5 4" stroke="#555" /></Icon>
    </div>
  </div>
);

const Watermark = () => (
  <svg className="absolute right-[79px] bottom-0 opacity-75" width="370" height="175" viewBox="0 0 370 175" aria-label="Baidu 经验">
    <g fill="#f2f2f2">
      <ellipse cx="135" cy="55" rx="12.500" ry="16" /><ellipse cx="159" cy="31" rx="12" ry="17" />
      <ellipse cx="190" cy="33" rx="12.500" ry="16.500" transform="rotate(10 190 33)" /><ellipse cx="208.500" cy="62.500" rx="13" ry="16" />
      <path d="M171 57c10 0 15 7 20 13c8 10 23 16 23 32c0 14-10 19-20 19c-9 0-15-2-23-2c-9 0-14 2-22 2c-12 0-20-8-20-20c0-14 13-20 21-30c6-8 11-14 21-14z" />
      <text x="3" y="119" fontSize="76" fontWeight="900" fontFamily="Inter, sans-serif">Bai</text>
      <text x="226" y="114" fontSize="58" fontWeight="900" fontFamily="'Noto Sans CJK SC', sans-serif">经验</text>
      <text x="6" y="166" fontSize="40" fontFamily="'Noto Sans', sans-serif" className="drop-shadow-[0_0_1px_#888888]">jingyan.baidu.com</text>
    </g>
    <text x="171" y="111" fontSize="50" fontWeight="800" textAnchor="middle" fill="#1b222b" fontFamily="Inter, sans-serif">du</text>
  </svg>
);

const Canvas = () => (
  <main className="flex-1 flex min-h-[755px] border-t-[5px] border-[#3b4453]">
    <div className="relative flex-1 overflow-hidden bg-[#212830]">
      <Grid />
      <div className="relative pl-0.5 pt-1 text-base leading-5 text-[#f0f0f0] font-['Noto_Sans_CJK_SC',sans-serif]">[−][俯视][二维线框]</div>
      <Ucs />
      <ViewCube />
      <NavBar />
      <CommandLine />
      <Watermark />
      <div className="absolute inset-y-0 right-0 w-[11px] flex">
        <span className="w-[7px] bg-gradient-to-b from-[#b8d0ea] from-0% via-[#dce8f5] via-[11%] to-[#b8d0ea] to-[12%]" />
        <span className="w-0.5 bg-[#27c4f0]" />
        <span className="w-0.5 bg-[#10151b]" />
      </div>
    </div>
  </main>
);

/* ---------- status bar ---------- */

const LTab = ({ label, active = false, gap = "" }: { label: string; active?: boolean; gap?: string }) => (
  <button className={`${gap} relative h-[22px] ${active ? "w-[70px] z-10 font-bold text-white" : "w-[69px] text-[#c3c6ca]"}`}>
    <svg className="absolute -left-1 top-0 w-[78px]" height="22" viewBox="0 0 78 22" aria-hidden="true">
      <path d="M0 0C12 2 8 22 18 22H56C66 22 66 2 78 0z" fill={active ? "#3b4453" : "#313947"} />
    </svg>
    <span className="relative block pb-0.5 leading-5">{label}</span>
  </button>
);

const St = ({ name, on = false, width = "w-[30px]", children }: P & { name: string; on?: boolean; width?: string }) => (
  <button
    aria-label={name}
    className={`${width} h-[30px] shrink-0 flex items-center justify-center ${on ? "bg-[#5d8cbf] border border-[#3b4453]" : ""}`}
  >
    {children}
  </button>
);
const SG = ({ children }: P) => <div className="flex h-[30px] bg-[#3b4453]">{children}</div>;

const Person = ({ white = false }: { white?: boolean }) => (
  <path d="M9 1c3 4 3 8 3 9l6 8l-7-3l-2 4l-2-4l-7 3l6-8c0-1 0-5 3-9z" fill={white ? "#fff" : "#d8d8d8"} stroke="none" />
);

const StatusBar = () => (
  <footer className="h-[35px] flex border-t border-[#3c4350]">
    <div className="flex pl-2">
      <LTab label="模型" active /><LTab label="布局1" gap="-ml-1.5" /><LTab label="布局2" gap="ml-px" />
      <button aria-label="新布局" className="mt-0.5 ml-[5px] w-7 h-5 rounded-tl-xl rounded-br-xl bg-[#313947] flex items-center justify-center">
        <Icon s={10}><path d="M5 0v10M0 5h10" strokeWidth="2.400" stroke="#a5a8ad" /></Icon>
      </button>
    </div>
    <span className="flex-1" />
    <div className="flex pt-px pr-px gap-[3px]">
      <SG><button className="w-[34px] h-[30px] whitespace-nowrap pl-1 flex items-center">模型</button></SG>
      <div className="flex h-[30px] bg-[#3b4453] w-[79px]">
        <St name="栅格" on><Icon><path d="M4.500 0v20M10.500 0v20M16 0v20M0 4.500h20M0 10.500h20M0 15.500h20" stroke="#fff" /></Icon></St>
        <St name="捕捉"><Icon s={16}>{[1.5, 7.5, 14].map((y) => [1.5, 7.5, 14].map((x) => <rect key={`${x}-${y}`} x={x - 1.5} y={y - 1.5} width="3" height="3" fill={G} stroke="none" />))}</Icon></St>
        <St name="捕捉选项" width="w-[18px]"><Down big /></St>
      </div>
      <SG>
        <St name="正交"><Icon><path d="M1 0v19h19M1 13h5v6" /></Icon></St>
        <St name="极轴" on><Icon><circle cx="8" cy="11" r="7.500" stroke="#e8f1fa" /><path d="M8 11L17 2M8 11h12M13 6l4 5" stroke="#fff" /></Icon></St>
        <St name="极轴选项" width="w-[18px]"><Down big /></St>
        <St name="等轴测" width="w-[30px]"><Icon><path d="M2 1l15 16" stroke="#c46a6a" /><path d="M10.500 0v19" stroke="#5fce8f" /><rect x="8.500" y="8.500" width="4" height="4" fill={D} strokeWidth="1" /></Icon></St>
        <St name="等轴测选项" width="w-[20px]"><Down big /></St>
        <St name="对象捕捉追踪" on><Icon><path d="M1 17L16 2" stroke="#fff" /><path d="M1 17h19" stroke="#b8d0ea" /><circle cx="8" cy="10" r="2" fill="#fff" stroke="none" /></Icon></St>
        <St name="对象捕捉" on><Icon><path d="M6 3h13v16H3V6" stroke="#fff" /><path d="M1 1h5v5H1z" stroke="#fff" /></Icon></St>
        <St name="捕捉列表" width="w-[20px]"><Down big /></St>
      </SG>
      <SG>
        <St name="注释可见性" on><Icon><Person white /><circle cx="16.500" cy="4" r="3" stroke="#fff" strokeWidth="1" /></Icon></St>
        <St name="自动缩放"><Icon><Person /><path d="M18 0l-4 5h3l-2 4l5-5h-3z" fill={G} stroke="none" /></Icon></St>
        <St name="注释比例图标"><Icon><Person /></Icon></St>
        <button className="w-[42px] h-[30px] pr-1 flex items-center justify-center gap-1">1:1<Down big /></button>
      </SG>
      <SG>
        <St name="切换工作空间">
          <Icon><circle cx="10" cy="10" r="5.500" strokeWidth="4" stroke="#dcdcdc" />
            {[0, 45, 90, 135, 180, 225, 270, 315].map((a) => <path key={a} d="M10 0v4" strokeWidth="4" stroke="#dcdcdc" transform={`rotate(${a} 10 10)`} />)}
          </Icon>
        </St>
        <St name="工作空间选项" width="w-[18px]"><Down big /></St>
        <span className="w-px bg-[#222933]" />
        <St name="注释监视器"><Icon><path d="M10 0v20M0 10h20" strokeWidth="2.600" stroke="#e0e0e0" /></Icon></St>
      </SG>
      <SG><St name="隔离对象" width="w-[31px]"><Icon><path d="M1 1h7v7H1z" /><circle cx="15.500" cy="9" r="4" /><path d="M8 12l4 7H4z" /></Icon></St></SG>
      <SG><span className="w-1" /></SG>
      <SG>
        <St name="全屏显示"><Icon><path d="M.7 3h18.600v14H.7z" /><path d="M12 5h5v5zM3 10v5h5z" fill={G} stroke="none" /><path d="M11 9l4-3M5 14l4-3" strokeDasharray="2 1" /></Icon></St>
        <St name="自定义"><Icon><path d="M0 2.500h20M0 10h20M0 17.500h20" strokeWidth="2.400" stroke="#e0e0e0" /></Icon></St>
      </SG>
    </div>
  </footer>
);

export default function App() {
  return (
    <div className="relative min-h-screen flex flex-col overflow-x-hidden bg-[#222933] text-[#f0f0f0] text-[15px] leading-5 font-['Noto_Sans','Noto_Sans_CJK_SC',sans-serif]">
      <Header />
      <RibbonTabs />
      <div className="flex gap-px pl-px">
        <DrawPanel /><ModifyPanel /><AnnotatePanel /><LayerPanel /><BlockPanel />
        <PropsPanel /><GroupPanel /><UtilPanel /><ClipPanel /><ViewPanel />
      </div>
      <FileTabs />
      <Canvas />
      <StatusBar />
      <div className="h-[7px] flex bg-gradient-to-r from-[#43352c] via-[#45432f] to-[#3e342c]">
        <span className="ml-[60px] w-[430px] bg-[#f2f2f2] border-t border-[#aaa]" />
        <span className="ml-[250px] w-[61px] bg-[#68665a]" />
      </div>
      <Tooltip />
    </div>
  );
}
